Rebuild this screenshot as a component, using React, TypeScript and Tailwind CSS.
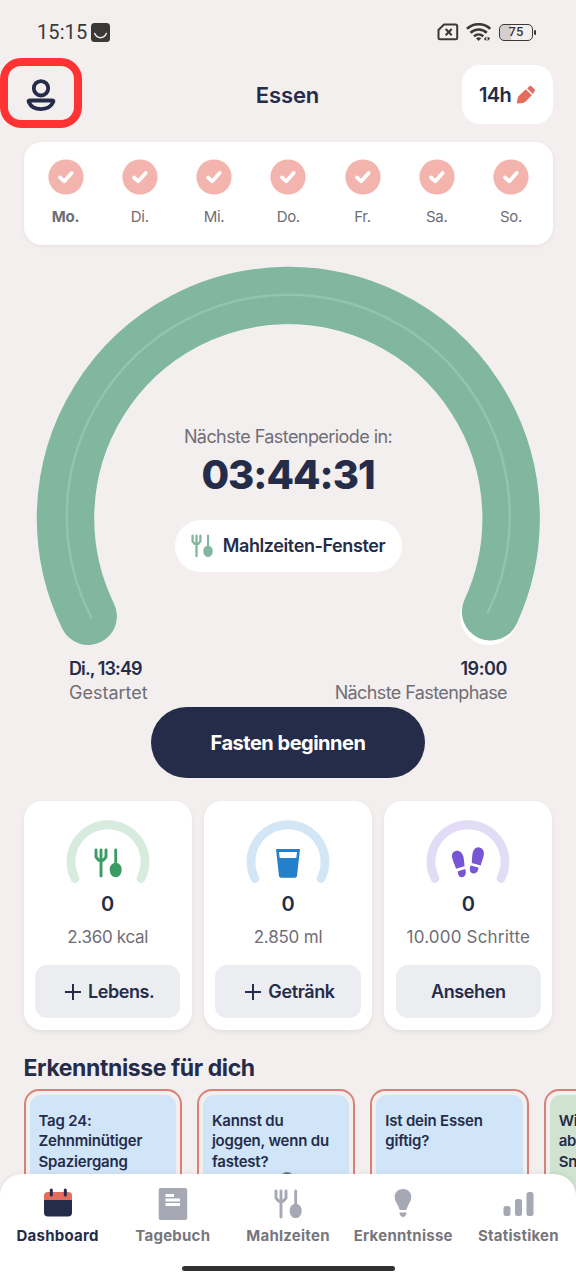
import type { ReactNode } from 'react'
import clsx from 'clsx'

const days = ['Mo.', 'Di.', 'Mi.', 'Do.', 'Fr.', 'Sa.', 'So.']

const insights = [
  { lines: ['Tag 24:', 'Zehnminütiger', 'Spaziergang'], color: 'bg-[#d1e5f9]' },
  { lines: ['Kannst du', 'joggen, wenn du', 'fastest?'], color: 'bg-[#d1e5f9]', picture: true },
  { lines: ['Ist dein Essen', 'giftig?'], color: 'bg-[#d1e5f9]' },
  { lines: ['Wi', 'ab', 'Sn'], color: 'bg-[#cfe3d0]' }
]

function Cutlery({ className }: { className?: string }) {
  return (
    <svg viewBox="0 0 28 30" fill="none" stroke="currentColor" strokeLinecap="round" className={className}>
      <path d="M2 1.9V9L4.6 12.200H9.400L12 9V1.9M7 1.9V28" strokeWidth="2.9" strokeLinejoin="round" />
      <path d="M21.700 1.9V17" strokeWidth="2.8" />
      <path
        d="M21.700 14.800c3.400 0 6 3 6 6.600 0 4.500-2.600 7.700-6 7.700s-6-3.200-6-7.700c0-3.600 2.600-6.600 6-6.600z"
        fill="currentColor"
        stroke="none"
      />
    </svg>
  )
}

function Glass() {
  return (
    <svg viewBox="0 0 24 29" className="h-[29px] w-6">
      <path d="M.8 0h22.4c.5 0 .8.4.7.9L21 26.8c-.1 1.2-1 2-2.2 2H5.2c-1.2 0-2.1-.8-2.2-2L.1.9C0 .4.3 0 .8 0z" fill="#2580cb" />
      <path d="M3 3h18l-.7 6H3.7z" fill="#fff" />
    </svg>
  )
}

function Steps() {
  return (
    <svg viewBox="0 0 34 32" fill="#7756d6" className="h-8 w-[34px]">
      <path d="M1.2 11C.2 6.500 2.400 4 5.600 3.700c3.500-.2 6 2.500 7 6.800.5 3 .7 5.700.9 8.700L5 21.700C4 18 2 15 1.200 11z" />
      <path d="M7 24.200l7-2.100c1.500 3 1 6.900-2.200 7.900-3.400 1-5.200-2-4.800-5.800z" />
      <path d="M21.400 7.500C22 2.700 24.800-.1 28.400.4c3.700.6 5 3.700 4.300 7.800-.6 3.700-2.200 6.500-3 10.200l-8.900-2.300c.1-3 .2-5.700.6-8.600z" />
      <path d="M19.700 18.400l7.700 2.200c0 3.900-2.300 6.300-5.400 5.800-3.400-.8-3.900-4.500-2.300-8z" />
    </svg>
  )
}

const trackers = [
  {
    ring: '#d7ebdf',
    icon: <Cutlery className="h-[30px] w-7 text-[#3b9c63]" />,
    goal: <span className="tracking-[-0.3px]">2.360 kcal</span>,
    action: 'Lebens.',
    plus: true
  },
  {
    ring: '#d3e6f6',
    icon: <Glass />,
    goal: <span className="tracking-[-0.2px]">2.850 ml</span>,
    action: 'Getränk',
    plus: true
  },
  {
    ring: '#e2dcf6',
    icon: <Steps />,
    goal: <span className="tracking-[0.2px]">10.000 Schritte</span>,
    action: 'Ansehen',
    plus: false
  }
]

function StatusBar() {
  return (
    <div className="flex h-16 items-center justify-between pl-[37px] pr-10 text-[#3b3938]">
      <div className="flex items-center gap-1">
        <span className="font-[Roboto] text-xl tracking-[0.1px]">15:15</span>
        <svg viewBox="0 0 19 19" className="size-[19px]">
          <rect width="19" height="19" rx="3.5" fill="#3b3938" />
          <path d="M3.7 10.5c2.800 5.600 8.800 5.600 11.600 0" fill="none" stroke="#f3efee" strokeWidth="1.6" strokeLinecap="round" />
        </svg>
      </div>
      <div className="flex items-center">
        <svg viewBox="0 0 22 18" fill="none" stroke="currentColor" className="h-[18px] w-[22px]">
          <path d="M7 1.500H18.500Q20.200 1.500 20.200 3V14.800Q20.200 16.300 18.700 16.300H3Q1.500 16.300 1.500 14.800V7Z" strokeWidth="2" />
          <path d="M8.700 6l6 6.200M14.700 6l-6 6.200" strokeWidth="2.1" />
        </svg>
        <svg viewBox="0 0 25 19" fill="none" stroke="currentColor" className="ml-[7px] h-[19px] w-[25px]">
          <path d="M1 5.800C7.500-.3 17.800-.3 24.300 5.800" strokeWidth="2.6" />
          <path d="M4.500 9.800C9.300 5.300 16 5.300 20.800 9.800" strokeWidth="2.6" />
          <path d="M8 13.300C10.700 10.800 14.600 10.800 17.300 13.300" strokeWidth="2.5" />
          <path d="M10 15.200q2.700-1.800 5.300 0L12.600 18z" fill="currentColor" stroke="none" />
          <path d="M20.300 13.500v4.500l-2.500-2zM21.600 13.500v4.500l2.500-2.500z" fill="currentColor" stroke="none" />
        </svg>
        <div className="ml-2 flex h-[17px] w-[34px] items-center justify-center rounded-[5px] border-[1.5px] border-current bg-linear-to-r from-[#d2cfce] from-35% to-transparent to-35% font-[Roboto] text-[13px] font-medium">
          75
        </div>
        <div className="ml-px h-[5px] w-0.5 rounded-sm bg-current" />
      </div>
    </div>
  )
}

function Header() {
  return (
    <header className="grid h-[62px] grid-cols-3 items-center pr-[23px]">
      <div className="-mt-1.5 flex h-[70px] w-[82px] items-center justify-center self-start rounded-[21px] border-8 border-[#ff3333]">
        <svg viewBox="0 0 30 34" fill="none" stroke="#252c49" className="mt-1 h-[34px] w-[30px]">
          <circle cx="15" cy="10.3" r="7.2" strokeWidth="3.8" />
          <path d="M3.500 22.500h23c1 0 1.100.7.700 1.600-1.800 4-6.200 7-12.200 7S4.600 28.100 2.800 24.100c-.4-.9-.3-1.600.7-1.600z" strokeWidth="3.8" />
        </svg>
      </div>
      <h1 className="-mt-px pl-[22px] text-center text-[22px] font-semibold tracking-[-0.1px]">Essen</h1>
      <button className="-mt-[3px] flex h-[59px] w-[91px] items-center justify-center gap-[5px] justify-self-end rounded-[18px] bg-white text-xl font-semibold tracking-[-0.7px]">
        14h
        <svg viewBox="0 0 20 20" fill="#e56b5d" className="size-5">
          <path d="M1.600 18.400C.9 18.400.8 17.900.9 17.200L1.700 13.300C2 12 2.500 11.200 3.300 10.400L9.800 4.300l6 6-6.500 6.500c-.8.800-1.600 1.100-2.700 1.200z" />
          <path d="M11.100 3.200L13.100 1.400c.8-.8 1.800-.8 2.600 0l2.600 2.700c.8.8.8 1.800 0 2.600L16.700 8.900z" />
        </svg>
      </button>
    </header>
  )
}

function Week() {
  return (
    <section className="ml-[23.5px] mr-[23px] mt-4 flex h-[103px] justify-between rounded-[18px] bg-white px-6 pt-[18px] shadow-[0_1px_5px_rgba(0,0,0,0.06)]">
      {days.map((day, i) => (
        <div key={day} className="flex w-9 flex-col items-center">
          <svg viewBox="0 0 36 36" className="-mt-px size-9">
            <circle cx="18" cy="18" r="17.6" fill="#f3b4ae" />
            <path d="M12 18.500l4.300 3.800 7.400-8.300" fill="none" stroke="#fff" strokeWidth="3.7" strokeLinecap="round" strokeLinejoin="round" />
          </svg>
          <span className={clsx('mt-3 text-[15px] leading-5 tracking-[-0.3px] text-[#6e6d74]', i === 0 && 'font-bold')}>
            {day}
          </span>
        </div>
      ))}
    </section>
  )
}

function FastingRing() {
  return (
    <section className="grid">
      <svg viewBox="0 245 576 402" fill="none" strokeLinecap="round" className="col-start-1 row-start-1 h-[402px] w-full">
        <path d="M88.200 616.300A222.800 222.800 0 1 1 488.800 616.300" stroke="#fff" strokeWidth="57.5" />
        <path d="M88.200 616.300A222.800 222.800 0 1 1 490.600 611.800" stroke="#80b79e" strokeWidth="57.5" />
        <path d="M91.300 617.500A221.500 221.500 0 1 1 487.800 612.500" stroke="#93c4ad" strokeWidth="2.5" />
      </svg>
      <div className="col-start-1 row-start-1 flex flex-col items-center pt-[180px]">
        <p className="text-lg leading-6 tracking-[-0.57px] text-[#706e75]">Nächste Fastenperiode in:</p>
        <p className="mt-0.5 text-[40px] font-extrabold leading-12 tracking-[-1px]">03:44:31</p>
        <div className="mt-[21px] flex h-[52px] w-[227px] items-center justify-center gap-2.5 rounded-full bg-white">
          <Cutlery className="h-6 w-[22px] text-[#80b79e]" />
          <span className="text-lg font-semibold tracking-[-0.4px]">Mahlzeiten-Fenster</span>
        </div>
      </div>
    </section>
  )
}

interface TrackerProps {
  ring: string
  icon: ReactNode
  goal: ReactNode
  action: string
  plus: boolean
}

function Tracker({ ring, icon, goal, action, plus }: TrackerProps) {
  return (
    <div className="flex h-[229px] flex-col items-center rounded-[18px] bg-white px-[11.5px] pt-[19px] shadow-[0_2px_5px_rgba(0,0,0,0.07)]">
      <div className="grid h-16 w-[84px] place-items-center">
        <svg viewBox="0 0 84 64" fill="none" className="col-start-1 row-start-1">
          <path d="M9 58.500A37 37 0 1 1 75 58.500" stroke={ring} strokeWidth="8.8" strokeLinecap="round" />
        </svg>
        <div className="col-start-1 row-start-1 mt-[22px]">{icon}</div>
      </div>
      <span className="mt-1.5 text-[20px] font-semibold leading-7">0</span>
      <div className="mt-[7px] text-[17px] leading-6 text-[#706e75]">{goal}</div>
      <button
        className={clsx(
          'mt-4 flex h-[53px] w-full items-center justify-center gap-[7px] rounded-xl bg-[#ebedf1] text-lg font-semibold tracking-[-0.4px]',
          plus && 'pl-1'
        )}
      >
        {plus && (
          <svg viewBox="0 0 16 16" stroke="#252c49" strokeWidth="2" className="size-4">
            <path d="M0 8h16M8 0v16" />
          </svg>
        )}
        {action}
      </button>
    </div>
  )
}

function Insights() {
  return (
    <section className="mt-6 pl-[23.5px]">
      <h2 className="text-[23px] font-bold leading-7 tracking-[-0.4px]">Erkenntnisse für dich</h2>
      <div className="mt-[7px] flex w-[680px] gap-[15px]">
        {insights.map((item) => (
          <div key={item.lines[0]} className="h-[200px] w-[158.4px] shrink-0 rounded-[15px] border-2 border-[#d98079] p-1">
            <div className={clsx('h-full rounded-[11px] px-[9px] pt-4 text-[15px] font-semibold leading-[20.3px] tracking-[-0.2px]', item.color)}>
              {item.lines.map((line) => (
                <p key={line} className="whitespace-nowrap">{line}</p>
              ))}
              {item.picture && <div className="ml-[68px] h-5 w-3.5 rounded-full bg-[#77777a]" />}
            </div>
          </div>
        ))}
      </div>
    </section>
  )
}

const tabs = [
  {
    label: 'Dashboard',
    icon: (
      <svg viewBox="0 0 30 34" className="h-[34px] w-[30px]">
        <path d="M1 13h28v12.500q0 4-4 4H5q-4 0-4-4z" fill="#252c49" />
        <path d="M1 13V8.500q0-3.500 4-3.500h20q4 0 4 3.500v4.500z" fill="#e56b5d" />
        <path d="M8.300 3v5M22.300 3v5" stroke="#252c49" strokeWidth="3" strokeLinecap="round" />
      </svg>
    )
  },
  {
    label: 'Tagebuch',
    icon: (
      <svg viewBox="0 0 30 34" className="h-[34px] w-[30px]">
        <rect x=".7" y="1" width="28.5" height="32" rx="2" fill="#a6a8b3" />
        <path d="M7.500 8.500H16M7.500 13H22M7.500 17.500H22" stroke="#fff" strokeWidth="3" />
      </svg>
    )
  },
  { label: 'Mahlzeiten', icon: <Cutlery className="h-[30px] w-7 text-[#a6a8b3]" /> },
  {
    label: 'Erkenntnisse',
    icon: (
      <svg viewBox="0 0 18 30" fill="#a6a8b3" className="-mt-0.5 h-[30px] w-[18px]">
        <path d="M9 1c4.800 0 8.300 3.500 8.300 8 0 3.400-1.500 5.300-2.700 7.400-.8 1.500-1.200 2.800-1.700 4-.4 1-1 1.500-2 1.500H7.100c-1 0-1.600-.5-2-1.500-.5-1.200-.9-2.500-1.700-4C2.200 14.300.7 12.400.7 9 .7 4.500 4.200 1 9 1z" />
        <path d="M6.500 24.500h5c.8 0 1.200.5.900 1.200-.6 1.700-1.700 3.200-3.400 3.200s-2.800-1.500-3.400-3.200c-.3-.7.100-1.200.9-1.200z" />
      </svg>
    )
  },
  {
    label: 'Statistiken',
    icon: (
      <svg viewBox="0 0 31 30" fill="#a6a8b3" className="h-[30px] w-[31px]">
        <rect x=".5" y="17" width="7" height="10" rx="2.5" />
        <rect x="12" y="10" width="7" height="17" rx="2.5" />
        <rect x="23.5" y="3" width="7" height="24" rx="2.5" />
      </svg>
    )
  }
]

function BottomNav() {
  return (
    <nav className="absolute inset-x-0 bottom-0 h-[106px] rounded-t-[22px] bg-white pt-3 shadow-[0_0_6px_rgba(0,0,0,0.08)]">
      <div className="grid grid-cols-5">
        {tabs.map((tab, i) => (
          <a key={tab.label} className="flex flex-col items-center">
            <div className="flex h-[35px] items-center">{tab.icon}</div>
            <span className={clsx('mt-[5px] text-[15px] font-bold leading-5 tracking-[0.25px]', i > 0 && 'text-[#77767c]')}>
              {tab.label}
            </span>
          </a>
        ))}
      </div>
      <div className="mx-auto mt-5 h-[5px] w-[213px] rounded-full bg-[#333132]" />
    </nav>
  )
}

export default function App() {
  return (
    <div className="relative h-[1280px] w-[576px] overflow-hidden bg-[#f3efee] font-[Inter,sans-serif] text-[#252c49]">
      <StatusBar />
      <Header />
      <Week />
      <FastingRing />
      <div className="mt-2.5 flex justify-between px-[69px] text-lg leading-6">
        <div>
          <p className="font-semibold tracking-[-0.9px]">Di., 13:49</p>
          <p className="text-[#706e75]">Gestartet</p>
        </div>
        <div className="text-right">
          <p className="font-semibold tracking-[-0.4px]">19:00</p>
          <p className="tracking-[-0.6px] text-[#706e75]">Nächste Fastenphase</p>
        </div>
      </div>
      <button className="mx-auto mt-0.5 block h-[71px] w-[274px] rounded-full bg-[#252c49] text-xl font-bold tracking-[-0.5px] text-white">
        Fasten beginnen
      </button>
      <section className="mx-[23.5px] mt-[23px] grid grid-cols-3 gap-3">
        {trackers.map((t) => (
          <Tracker key={t.action} {...t} />
        ))}
      </section>
      <Insights />
      <BottomNav />
    </div>
  )
}
